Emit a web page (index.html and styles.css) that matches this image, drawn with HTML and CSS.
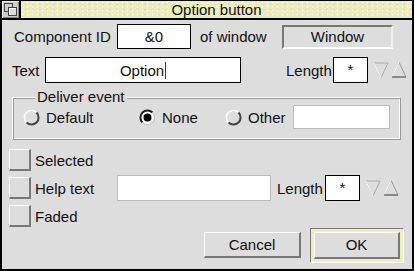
FILE: index.html
```html
<!DOCTYPE html>
<html lang="en">
<head>
  <meta charset="UTF-8">
  <title>Option button</title>
  <link rel="stylesheet" href="styles.css">
</head>
<body>
  <div class="window">
    <div class="titlebar">
      <div class="backicon">
        <svg width="15" height="15" viewBox="0 0 15 15">
          <rect x="1.5" y="1.5" width="8" height="8" fill="#ccc" stroke="#444"/>
          <rect x="5.5" y="5.5" width="8" height="8" fill="#ddd" stroke="#444"/>
          <path d="M6.5 12.5 V6.5 H12.5" fill="none" stroke="#fff"/>
        </svg>
      </div>
      <div class="title">Option button</div>
    </div>

    <div class="content">
      <div class="row row-id">
        <span class="lbl lbl-comp">Component ID</span>
        <span class="field field-id">&amp;0</span>
        <span class="lbl lbl-of">of window</span>
        <span class="display">Window</span>
      </div>

      <div class="row row-text">
        <span class="lbl lbl-text">Text</span>
        <span class="field field-text">Option<span class="caret"></span></span>
        <span class="lbl lbl-len">Length</span>
        <span class="field field-len">*</span>
        <svg class="arrows" width="34" height="20" viewBox="0 0 34 20">
          <path d="M1 3 H15 L8 18 Z" fill="none" stroke="#aaa"/>
          <path d="M1 3 L8 18" stroke="#fff"/>
          <path d="M26 2 L33 17 H19 Z" fill="none" stroke="#999"/>
          <path d="M19 17 L26 2" stroke="#fff"/>
          <path d="M19 17 H33" stroke="#777" stroke-width="1.5"/>
        </svg>
      </div>

      <fieldset class="group">
        <legend>Deliver event</legend>
        <div class="radios">
          <span class="radio radio-default">
            <svg width="17" height="17" viewBox="0 0 17 17">
              <circle cx="8.5" cy="8.5" r="7" fill="#ddd"/>
              <path d="M3.5 13.5 A7 7 0 0 1 13.5 3.5" fill="none" stroke="#fff" stroke-width="1.5"/>
              <path d="M13.5 3.5 A7 7 0 0 1 3.5 13.5" fill="none" stroke="#444" stroke-width="2"/>
            </svg>
            Default
          </span>
          <span class="radio radio-none">
            <svg width="17" height="17" viewBox="0 0 17 17">
              <circle cx="8.5" cy="8.5" r="7" fill="#fff"/>
              <path d="M3.5 13.5 A7 7 0 0 1 13.5 3.5" fill="none" stroke="#222" stroke-width="2"/>
              <path d="M13.5 3.5 A7 7 0 0 1 3.5 13.5" fill="none" stroke="#bbb" stroke-width="1"/>
              <circle cx="8.5" cy="8.5" r="4" fill="#000"/>
            </svg>
            None
          </span>
          <span class="radio radio-other">
            <svg width="17" height="17" viewBox="0 0 17 17">
              <circle cx="8.5" cy="8.5" r="7" fill="#ddd"/>
              <path d="M3.5 13.5 A7 7 0 0 1 13.5 3.5" fill="none" stroke="#fff" stroke-width="1.5"/>
              <path d="M13.5 3.5 A7 7 0 0 1 3.5 13.5" fill="none" stroke="#444" stroke-width="2"/>
            </svg>
            Other
          </span>
          <span class="input input-other"></span>
        </div>
      </fieldset>

      <div class="row row-check row-selected">
        <span class="check"></span>
        <span class="lbl">Selected</span>
      </div>

      <div class="row row-check row-help">
        <span class="check"></span>
        <span class="lbl lbl-help">Help text</span>
        <span class="input input-help"></span>
        <span class="lbl lbl-len2">Length</span>
        <span class="field field-len">*</span>
        <svg class="arrows" width="34" height="20" viewBox="0 0 34 20">
          <path d="M1 3 H15 L8 18 Z" fill="none" stroke="#aaa"/>
          <path d="M1 3 L8 18" stroke="#fff"/>
          <path d="M26 2 L33 17 H19 Z" fill="none" stroke="#999"/>
          <path d="M19 17 L26 2" stroke="#fff"/>
          <path d="M19 17 H33" stroke="#777" stroke-width="1.5"/>
        </svg>
      </div>

      <div class="row row-check row-faded">
        <span class="check"></span>
        <span class="lbl">Faded</span>
      </div>

      <div class="row row-buttons">
        <span class="btn btn-cancel">Cancel</span>
        <span class="okwrap"><span class="btn btn-ok">OK</span></span>
      </div>
    </div>
  </div>
</body>
</html>
```

FILE: styles.css
```css
* {
  box-sizing: border-box;
}
body {
  margin: 0;
  font-family: "Liberation Sans", Arial, sans-serif;
  font-size: 15px;
  color: #111;
}
.window {
  width: 414px;
  height: 271px;
  border: 2px solid #000;
  border-top-width: 1px;
  background: #ddd;
  display: flex;
  flex-direction: column;
}
.titlebar {
  display: flex;
  height: 19px;
  border-bottom: 2px solid #000;
}
.backicon {
  width: 19px;
  border-right: 2px solid #000;
  background: #ccc;
  box-shadow: inset 1px 1px #eee, inset -1px -1px #888;
  display: flex;
  align-items: center;
  justify-content: center;
}
.title {
  flex: 1;
  text-align: center;
  line-height: 17px;
  background-color: #ecebbc;
  background-image:
    radial-gradient(circle at 30% 40%, #f8f8e4 0.6px, transparent 1.2px),
    radial-gradient(circle at 70% 70%, #dcdcae 0.6px, transparent 1.2px);
  background-size: 5px 4px, 7px 5px;
}
.content {
  padding-top: 4px;
}
.row {
  display: flex;
  align-items: center;
}
.lbl {
  white-space: nowrap;
}
.field {
  height: 100%;
  display: flex;
  align-items: center;
  justify-content: center;
  border: 1px solid #000;
  background: #fff;
}
.input {
  display: block;
  background: #fff;
  border: 1px solid #bbb;
  height: 24px;
}

/* component id row */
.row-id {
  height: 25px;
  padding-left: 12px;
}
.lbl-comp {
  width: 103px;
}
.field-id {
  width: 74px;
}
.lbl-of {
  margin-left: 9px;
  width: 82px;
}
.display {
  width: 111px;
  height: 24px;
  display: flex;
  align-items: center;
  justify-content: center;
  border: 2px solid;
  border-color: #777 #eee #fff #777;
}

/* text row */
.row-text {
  height: 26px;
  margin-top: 8px;
  padding-left: 10px;
}
.lbl-text {
  width: 33px;
}
.field-text {
  width: 196px;
}
.caret {
  display: inline-block;
  width: 1px;
  height: 17px;
  margin-left: 1px;
  background: #c00;
}
.lbl-len {
  margin-left: 45px;
  width: 47px;
}
.field-len {
  width: 35px;
  align-items: flex-start;
  padding-top: 3px;
}
.arrows {
  margin-left: 5px;
}

/* deliver event group */
.group {
  margin: 6px 0 0 10px;
  width: 389px;
  padding: 0 0 10px 10px;
  border: 1px solid;
  border-color: #fff #999 #999 #fff;
  box-shadow: inset 1px 1px #999, inset -1px -1px #fff;
}
.group legend {
  margin-left: 12px;
  padding: 0 2px;
  line-height: 16px;
  background: #ddd;
}
.radios {
  display: flex;
  align-items: center;
  height: 24px;
}
.radio {
  display: flex;
  align-items: center;
  gap: 6px;
}
.radio-default {
  width: 116px;
}
.radio-none {
  width: 86px;
}
.radio-other {
  width: 68px;
}
.input-other {
  width: 97px;
}

/* option rows */
.row-check {
  padding-left: 7px;
}
.check {
  width: 22px;
  height: 22px;
  margin-right: 4px;
  background: #ddd;
  border: solid;
  border-width: 1px 2px 2px 1px;
  border-color: #fff #777 #777 #fff;
}
.row-selected {
  height: 22px;
  margin-top: 9px;
}
.row-help {
  height: 26px;
  margin-top: 4px;
}
.lbl-help {
  width: 82px;
}
.input-help {
  width: 154px;
  height: 26px;
}
.lbl-len2 {
  margin-left: 6px;
  width: 48px;
}
.row-faded {
  height: 22px;
  margin-top: 4px;
}

/* buttons */
.row-buttons {
  height: 36px;
  justify-content: flex-end;
  padding-right: 8px;
  gap: 9px;
}
.btn {
  display: flex;
  align-items: center;
  justify-content: center;
  background: #ddd;
  border: solid;
  border-width: 1px 2px 2px 1px;
  border-color: #fff #777 #777 #fff;
}
.btn-cancel {
  width: 97px;
  height: 26px;
}
.okwrap {
  display: flex;
  width: 94px;
  height: 35px;
  padding: 3px;
  background: #eeeec4;
  border: 1px solid;
  border-color: #777 #fff #fff #777;
}
.btn-ok {
  flex: 1;
}
```
